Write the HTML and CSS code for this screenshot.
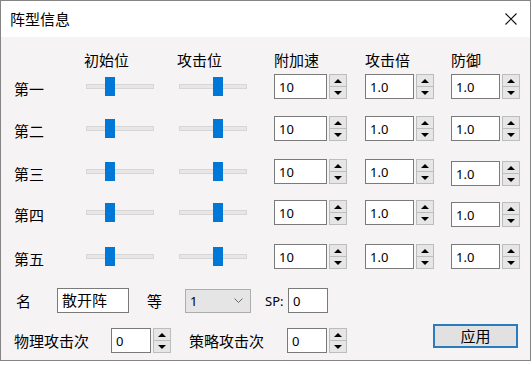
FILE: index.html
```html
<!DOCTYPE html>
<html lang="zh-CN">
<head>
    <meta charset="UTF-8">
    <meta name="viewport" content="width=device-width, initial-scale=1.0">
    <title>阵型信息</title>
    <link rel="stylesheet" href="styles.css">
</head>
<body>

<div class="window">
    <div class="titlebar">
        <span class="title">阵型信息</span>
        <svg class="close" width="12" height="12" viewBox="0 0 12 12">
            <path d="M0.5 0.5 L11.5 11.5 M11.5 0.5 L0.5 11.5" stroke="#111" stroke-width="1.1" fill="none"/>
        </svg>
    </div>

    <div class="content">
        <div class="grid">
            <!-- header -->
            <div></div>
            <div class="head head-first">初始位</div>
            <div class="head head-first">攻击位</div>
            <div class="head">附加速</div>
            <div class="head">攻击倍</div>
            <div class="head">防御</div>

            <!-- row 1 -->
            <div class="cell label">第一</div>
            <div class="cell"><div class="slider"><div class="track"></div><div class="thumb" style="left: 19px"></div></div></div>
            <div class="cell"><div class="slider"><div class="track"></div><div class="thumb" style="left: 34px"></div></div></div>
            <div class="cell"><input class="num" value="10"><div class="spin"><span class="up"></span><span class="down"></span></div></div>
            <div class="cell"><input class="num narrow" value="1.0"><div class="spin"><span class="up"></span><span class="down"></span></div></div>
            <div class="cell"><input class="num narrow" value="1.0"><div class="spin"><span class="up"></span><span class="down"></span></div></div>

            <!-- row 2 -->
            <div class="cell label">第二</div>
            <div class="cell"><div class="slider"><div class="track"></div><div class="thumb" style="left: 19px"></div></div></div>
            <div class="cell"><div class="slider"><div class="track"></div><div class="thumb" style="left: 34px"></div></div></div>
            <div class="cell"><input class="num" value="10"><div class="spin"><span class="up"></span><span class="down"></span></div></div>
            <div class="cell"><input class="num narrow" value="1.0"><div class="spin"><span class="up"></span><span class="down"></span></div></div>
            <div class="cell"><input class="num narrow" value="1.0"><div class="spin"><span class="up"></span><span class="down"></span></div></div>

            <!-- row 3 -->
            <div class="cell label">第三</div>
            <div class="cell"><div class="slider"><div class="track"></div><div class="thumb" style="left: 19px"></div></div></div>
            <div class="cell"><div class="slider"><div class="track"></div><div class="thumb" style="left: 34px"></div></div></div>
            <div class="cell"><input class="num" value="10"><div class="spin"><span class="up"></span><span class="down"></span></div></div>
            <div class="cell"><input class="num narrow" value="1.0"><div class="spin"><span class="up"></span><span class="down"></span></div></div>
            <div class="cell lower"><input class="num narrow" value="1.0"><div class="spin"><span class="up"></span><span class="down"></span></div></div>

            <!-- row 4 -->
            <div class="cell label">第四</div>
            <div class="cell"><div class="slider"><div class="track"></div><div class="thumb" style="left: 19px"></div></div></div>
            <div class="cell"><div class="slider"><div class="track"></div><div class="thumb" style="left: 34px"></div></div></div>
            <div class="cell"><input class="num" value="10"><div class="spin"><span class="up"></span><span class="down"></span></div></div>
            <div class="cell"><input class="num narrow" value="1.0"><div class="spin"><span class="up"></span><span class="down"></span></div></div>
            <div class="cell lower"><input class="num narrow" value="1.0"><div class="spin"><span class="up"></span><span class="down"></span></div></div>

            <!-- row 5 -->
            <div class="cell label">第五</div>
            <div class="cell"><div class="slider"><div class="track"></div><div class="thumb" style="left: 19px"></div></div></div>
            <div class="cell"><div class="slider"><div class="track"></div><div class="thumb" style="left: 34px"></div></div></div>
            <div class="cell"><input class="num" value="10"><div class="spin"><span class="up"></span><span class="down"></span></div></div>
            <div class="cell"><input class="num narrow" value="1.0"><div class="spin"><span class="up"></span><span class="down"></span></div></div>
            <div class="cell"><input class="num narrow" value="1.0"><div class="spin"><span class="up"></span><span class="down"></span></div></div>
        </div>

        <div class="meta meta-name">
            <span class="lbl lbl-name">名</span>
            <input class="text name-box" value="散开阵">
            <span class="lbl lbl-rank">等</span>
            <div class="combo">
                <span>1</span>
                <svg width="9" height="5" viewBox="0 0 9 5"><polyline points="0.5,0.5 4.5,4.5 8.5,0.5" fill="none" stroke="#666" stroke-width="1"/></svg>
            </div>
            <span class="lbl-sp">SP:</span>
            <input class="num small" value="0">
        </div>

        <div class="meta meta-attack">
            <span class="lbl lbl-phys">物理攻击次</span>
            <input class="num small" value="0">
            <div class="spin"><span class="up"></span><span class="down"></span></div>
            <span class="lbl lbl-tactic">策略攻击次</span>
            <input class="num small" value="0">
            <div class="spin"><span class="up"></span><span class="down"></span></div>
            <button class="apply">应用</button>
        </div>
    </div>
</div>

</body>
</html>
```

FILE: styles.css
```css
body {
    margin: 0;
    background-color: #fff;
    font-family: "Noto Sans", "Noto Sans CJK SC", sans-serif;
    color: #000;
}

.window {
    width: 529px;
    height: 359px;
    border: 1px solid #858585;
    background-color: #f6f3f5;
}

.titlebar {
    height: 36px;
    background-color: #fff;
    display: flex;
    align-items: center;
    justify-content: space-between;
    padding: 0 13px 0 9px;
}

.title {
    font-size: 15px;
    line-height: 20px;
}

.content {
    padding: 13px 0 0 13px;
}

.grid {
    display: grid;
    grid-template-columns: 72px 93px 95px 91px 86px 79px;
    grid-template-rows: 24px 42px 43px 41px 44px 25px;
    align-items: start;
}

.head {
    font-size: 15px;
    line-height: 20px;
}

.head-first {
    margin-left: -2px;
}

.cell {
    height: 25px;
    display: flex;
    align-items: center;
}

.cell.lower {
    margin-top: 2px;
}

.label {
    font-size: 15px;
    padding-top: 2px;
}

.slider {
    position: relative;
    width: 68px;
    height: 25px;
}

.track {
    position: absolute;
    left: 0;
    right: 0;
    top: 10px;
    height: 5px;
    box-sizing: border-box;
    background-color: #e7e7e7;
    border: 1px solid #d6d6d6;
}

.thumb {
    position: absolute;
    top: 3px;
    width: 10px;
    height: 19px;
    background-color: #0078d7;
}

.num,
.text {
    box-sizing: border-box;
    width: 53px;
    height: 25px;
    margin: 0;
    padding: 0 0 0 4px;
    border: 1px solid #7a7a7a;
    background-color: #fff;
    font-family: "Noto Sans", "Noto Sans CJK SC", sans-serif;
    font-size: 13px;
    color: #000;
    outline: none;
}

.num.narrow {
    width: 49px;
}

.num.small {
    width: 40px;
}

.spin {
    width: 18px;
    height: 25px;
    margin-left: 2px;
    display: flex;
    flex-direction: column;
}

.spin span {
    box-sizing: border-box;
    flex: 1;
    display: flex;
    align-items: center;
    justify-content: center;
    background-color: #e6e6e6;
    border: 1px solid #bdbdbd;
}

.spin .down {
    border-top: none;
}

.spin .up::after {
    content: "";
    border-left: 4px solid transparent;
    border-right: 4px solid transparent;
    border-bottom: 4px solid #000;
}

.spin .down::after {
    content: "";
    border-left: 4px solid transparent;
    border-right: 4px solid transparent;
    border-top: 4px solid #000;
}

.meta {
    display: flex;
    align-items: center;
    height: 25px;
}

.meta-name {
    margin-top: 19px;
}

.meta-attack {
    margin-top: 15px;
}

.lbl {
    font-size: 15px;
    flex-shrink: 0;
}

.lbl-name {
    width: 41px;
    padding-left: 2px;
}

.name-box {
    width: 72px;
    font-size: 15px;
    padding-bottom: 3px;
}

.lbl-rank {
    width: 38px;
    margin-left: 18px;
}

.combo {
    box-sizing: border-box;
    width: 66px;
    height: 24px;
    display: flex;
    align-items: center;
    justify-content: space-between;
    padding: 0 7px 0 4px;
    background-color: #e5e5e5;
    border: 1px solid #adadad;
    font-size: 13px;
}

.lbl-sp {
    width: 23px;
    margin-left: 14px;
    font-size: 13px;
}

.lbl-phys {
    width: 97px;
}

.lbl-tactic {
    width: 98px;
    margin-left: 18px;
}

.apply {
    align-self: flex-start;
    margin: -4px 12px 0 auto;
    width: 85px;
    height: 24px;
    padding: 0;
    border: 2px solid #2b7cbd;
    background-color: #e1e1e1;
    font-family: "Noto Sans CJK SC", sans-serif;
    font-size: 15px;
    line-height: 18px;
    color: #000;
}
```
